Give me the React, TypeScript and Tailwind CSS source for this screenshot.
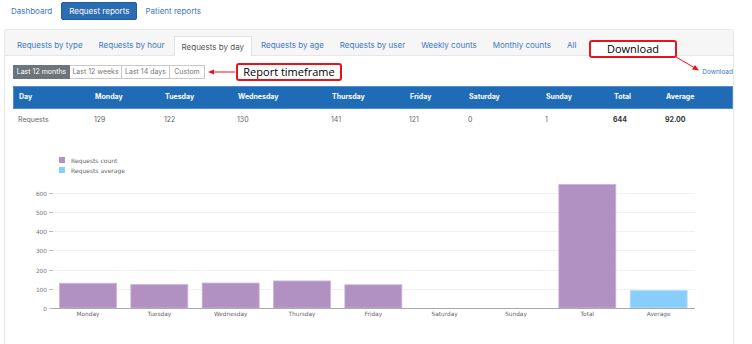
import React from 'react';

const tabs = [
  'Requests by type',
  'Requests by hour',
  'Requests by day',
  'Requests by age',
  'Requests by user',
  'Weekly counts',
  'Monthly counts',
  'All',
];

const ranges = [
  { label: 'Last 12 months', w: 57 },
  { label: 'Last 12 weeks', w: 52 },
  { label: 'Last 14 days', w: 48 },
  { label: 'Custom', w: 35 },
];

const cols = [
  { label: 'Day', w: 81, value: 'Requests' },
  { label: 'Monday', w: 70, value: '129' },
  { label: 'Tuesday', w: 73, value: '122' },
  { label: 'Wednesday', w: 94, value: '130' },
  { label: 'Thursday', w: 78, value: '141' },
  { label: 'Friday', w: 59, value: '121' },
  { label: 'Saturday', w: 77, value: '0' },
  { label: 'Sunday', w: 68, value: '1' },
  { label: 'Total', w: 52, value: '644', bold: true },
  { label: 'Average', w: 65, value: '92.00', bold: true },
];

const bars = [
  { label: 'Monday', v: 129 },
  { label: 'Tuesday', v: 122 },
  { label: 'Wednesday', v: 130 },
  { label: 'Thursday', v: 141 },
  { label: 'Friday', v: 121 },
  { label: 'Saturday', v: 0 },
  { label: 'Sunday', v: 1 },
  { label: 'Total', v: 644 },
  { label: 'Average', v: 92, avg: true },
];

// chart coords are relative to the svg (page x - 13, page y - 140)
const Chart: React.FC = () => {
  const x0 = 40;
  const x1 = 682;
  const base = 167;
  const scale = 0.192;
  const step = (x1 - x0) / 9;
  return (
    <svg width="720" height="190" className="block" style={{ fontFamily: '"DejaVu Sans", sans-serif' }}>
      <rect x="46" y="16" width="6" height="6" fill="#b091c1" />
      <text x="58" y="21.5" fontSize="6" fill="#666">Requests count</text>
      <rect x="46" y="26" width="6" height="6" fill="#87cefa" />
      <text x="58" y="31.5" fontSize="6" fill="#666">Requests average</text>
      {[0, 100, 200, 300, 400, 500, 600].map((t) => {
        const y = Math.round(base - t * scale) + 0.5;
        return (
          <g key={t}>
            {t > 0 && <line x1={x0} x2={x1} y1={y} y2={y} stroke="#f0f0f0" strokeWidth="1" />}
            <line x1={x0 - 4} x2={x0} y1={y} y2={y} stroke="#bbb" strokeWidth="1" />
            <text x={x0 - 6} y={y + 2} fontSize="5.8" fill="#777" textAnchor="end">{t}</text>
          </g>
        );
      })}
      {bars.map((b, i) => {
        const h = b.v * scale;
        const bx = x0 + i * step + 6.5;
        return (
          <g key={b.label}>
            {h > 1 && (
              <rect
                x={bx}
                y={base - h}
                width={57}
                height={h}
                fill={b.avg ? '#87cefa' : '#b091c1'}
                stroke={b.avg ? '#b8e2fc' : '#cdb6d9'}
                strokeWidth="0.8"
              />
            )}
            <text x={bx + 28.5} y={base + 7.5} fontSize="5.8" fill="#666" textAnchor="middle">{b.label}</text>
          </g>
        );
      })}
      <line x1={x0} x2={x1} y1={base + 0.5} y2={base + 0.5} stroke="#aaa" strokeWidth="1" />
    </svg>
  );
};

const App: React.FC = () => {
  return (
    <div className="relative w-[752px] h-[344px] overflow-hidden bg-white text-[8px]" style={{ fontFamily: 'Inter, "Open Sans", sans-serif' }}>
      <div className="flex items-center pl-[6px] pt-[2px] h-[20px]">
        <span className="px-[5px] text-[#3c78bf]">Dashboard</span>
        <span className="ml-[4px] h-[18px] flex items-center px-[7px] bg-[#2b6cb3] text-white rounded-[2px] border border-[#1f5e9f]">Request reports</span>
        <span className="ml-[4px] px-[4px] text-[#3c78bf]">Patient reports</span>
      </div>

      <div className="mt-[9px] ml-[4px] w-[730px] h-[320px] border border-[#e8e8e8] rounded-[2px]">
        <div className="flex items-end h-[26px] bg-[#f6f6f6] border-b border-[#e6e6e6] pl-[4px]">
          {tabs.map((t, i) =>
            i === 2 ? (
              <span key={t} className="h-[20px] flex items-center px-[7px] mx-[1px] bg-white border border-b-0 border-[#e2e2e2] text-[#555] -mb-px">
                {t}
              </span>
            ) : (
              <span key={t} className="h-[20px] flex items-center px-[8px] text-[#3c78bf]">{t}</span>
            ),
          )}
        </div>

        <div className="pl-[8px]">
          <div className="flex items-center justify-between mt-[9px] h-[14px]">
            <div className="flex text-[7px]">
              {ranges.map((r, i) => (
                <span
                  key={r.label}
                  className={
                    i === 0
                      ? 'h-[14px] flex items-center justify-center bg-[#6c757d] text-white border border-[#6c757d]'
                      : 'h-[14px] flex items-center justify-center text-[#777] border border-l-0 border-[#c8c8c8]'
                  }
                  style={{ width: r.w }}
                >
                  {r.label}
                </span>
              ))}
            </div>
            <span className="mt-[2px] text-[6.5px] text-[#3c78bf]">Download</span>
          </div>

          <div className="mt-[7px] w-[720px]">
            <div className="flex items-center h-[23px] bg-[#1f6bb5] border border-[#4f8fd0] text-white font-bold text-[7px]">
              {cols.map((c, i) => (
                <span key={c.label} className={i === 0 ? 'pl-[5px]' : ''} style={{ width: c.w }}>{c.label}</span>
              ))}
            </div>
            <div className="flex items-center h-[22px] text-[7px] text-[#666]">
              {cols.map((c, i) => (
                <span key={c.label} className={(i === 0 ? 'pl-[5px] ' : '') + (c.bold ? 'font-bold text-[#333]' : '')} style={{ width: c.w }}>
                  {c.value}
                </span>
              ))}
            </div>
          </div>

          <div className="mt-[10px]">
            <Chart />
          </div>
        </div>
      </div>

      {/* annotations */}
      <div className="absolute left-[236px] top-[63px] w-[106px] h-[18px] border-2 border-[#e8141c] rounded-[3px] bg-white flex items-center justify-center text-[11px] text-black" style={{ fontFamily: '"Open Sans", sans-serif' }}>
        Report timeframe
      </div>
      <div className="absolute left-[589px] top-[40px] w-[88px] h-[18px] border-2 border-[#e8141c] rounded-[3px] bg-white flex items-center justify-center text-[11px] text-black" style={{ fontFamily: '"Open Sans", sans-serif' }}>
        Download
      </div>
      <svg className="absolute left-0 top-0" width="752" height="344">
        <line x1="235" y1="72" x2="212" y2="72" stroke="#e8141c" strokeWidth="1" />
        <polygon points="208,72 214,69.5 214,74.5" fill="#e8141c" />
        <line x1="676" y1="57" x2="695" y2="68" stroke="#e8141c" strokeWidth="1" />
        <polygon points="699,70.5 692,69.5 695,65" fill="#e8141c" />
      </svg>
    </div>
  );
};

export default App;
